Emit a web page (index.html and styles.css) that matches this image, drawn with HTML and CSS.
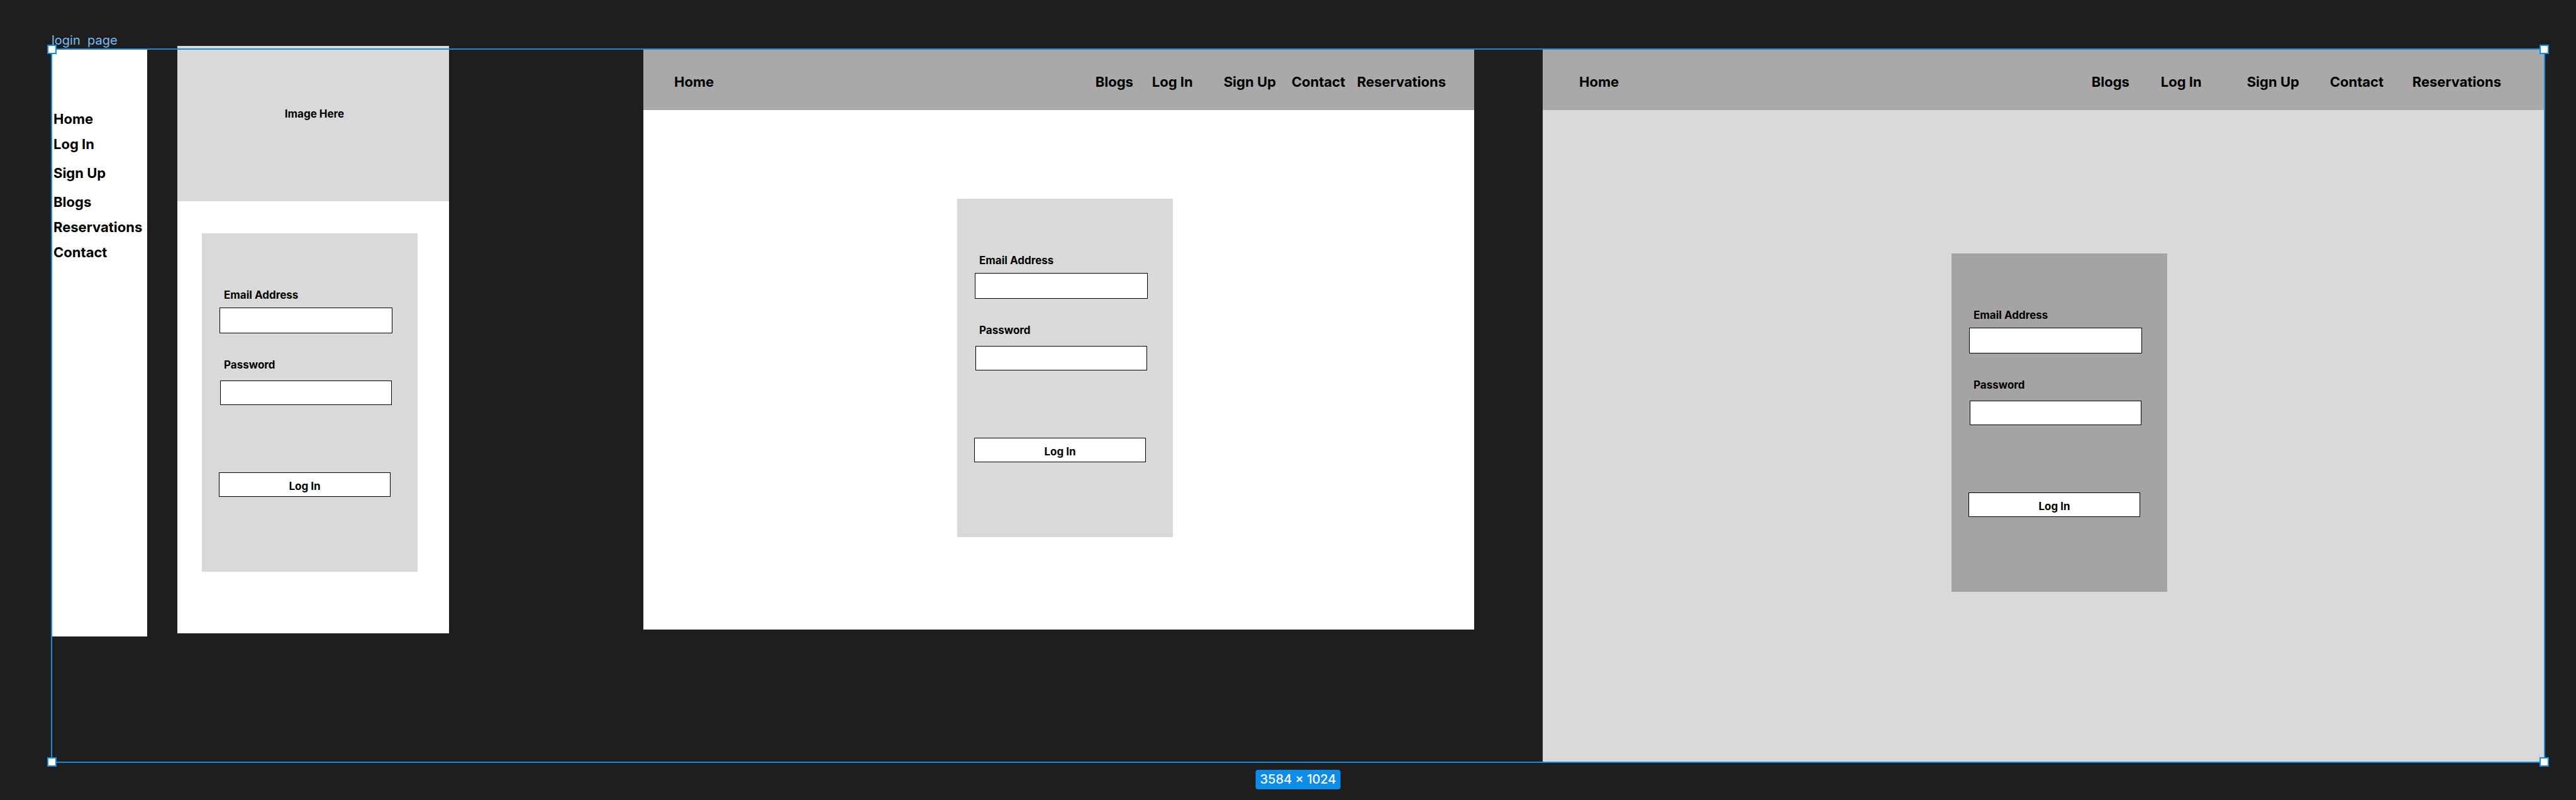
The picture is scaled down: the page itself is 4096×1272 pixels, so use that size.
FILE: index.html
```html
<!DOCTYPE html>
<html lang="en">
<head>
<meta charset="utf-8">
<title>login page</title>
<link rel="stylesheet" href="styles.css">
</head>
<body>
<main class="canvas">
  <section class="group">
    <nav class="artboard drawer">
      <a href="#">Home</a>
      <a href="#">Log In</a>
      <a href="#" class="spaced">Sign Up</a>
      <a href="#" class="spaced">Blogs</a>
      <a href="#">Reservations</a>
      <a href="#">Contact</a>
    </nav>

    <section class="artboard mobile">
      <div class="hero">Image Here</div>
      <div class="stage">
        <form class="card">
          <label for="m-email">Email Address</label>
          <input class="email" id="m-email" type="email">
          <label for="m-password">Password</label>
          <input class="password" id="m-password" type="password">
          <button type="button">Log In</button>
        </form>
      </div>
    </section>

    <section class="artboard tablet">
      <header class="topbar">
        <a href="#">Home</a>
        <nav class="links">
          <a href="#">Blogs</a>
          <a href="#">Log In</a>
          <a href="#">Sign Up</a>
          <a href="#">Contact</a>
          <a href="#">Reservations</a>
        </nav>
      </header>
      <div class="stage">
        <form class="card">
          <label for="t-email">Email Address</label>
          <input class="email" id="t-email" type="email">
          <label for="t-password">Password</label>
          <input class="password" id="t-password" type="password">
          <button type="button">Log In</button>
        </form>
      </div>
    </section>

    <section class="artboard desktop">
      <header class="topbar">
        <a href="#">Home</a>
        <nav class="links">
          <a href="#">Blogs</a>
          <a href="#">Log In</a>
          <a href="#">Sign Up</a>
          <a href="#">Contact</a>
          <a href="#">Reservations</a>
        </nav>
      </header>
      <div class="stage">
        <form class="card">
          <label for="d-email">Email Address</label>
          <input class="email" id="d-email" type="email">
          <label for="d-password">Password</label>
          <input class="password" id="d-password" type="password">
          <button type="button">Log In</button>
        </form>
      </div>
    </section>

    <div class="group-name">login  page</div>
    <div class="selection"></div>
    <span class="handle top left"></span>
    <span class="handle top right"></span>
    <span class="handle bottom left"></span>
    <span class="handle bottom right"></span>
    <div class="size-badge">3584 × 1024</div>
  </section>
</main>
</body>
</html>
```

FILE: styles.css
```css
* {
  box-sizing: border-box;
}

body {
  margin: 0;
  background: #1e1e1e;
  color: #000;
  font-family: Inter, "Liberation Sans", sans-serif;
}

a {
  color: inherit;
  text-decoration: none;
}

.canvas {
  display: flex;
  min-height: 100vh;
  padding: 78px 50px 60px 82px;
}

/* Group of artboards: drawer, mobile, tablet, desktop, with fixed gutters */
.group {
  position: relative;
  flex: 1;
  display: grid;
  grid-template-columns: 152fr 48px 432fr 309px 1321fr 109px 1593fr;
  align-items: start;
}

.artboard {
  background: #fff;
}

.drawer {
  grid-column: 1;
  display: flex;
  flex-direction: column;
  min-height: 934px;
  padding: 91px 0 0 3px;
  font-size: 22px;
  font-weight: 700;
  line-height: 40px;
}

.spaced {
  margin-top: 6px;
}

.mobile {
  grid-column: 3;
  margin-top: -5px;
  padding-bottom: 98px;
}

.tablet {
  grid-column: 5;
  padding-bottom: 147px;
}

.desktop {
  grid-column: 7;
  align-self: stretch;
  background: #d9d9d9;
}

.hero {
  display: flex;
  align-items: center;
  justify-content: center;
  height: 247px;
  padding: 0 0 32px 4px;
  background: #d9d9d9;
  font-size: 17px;
  font-weight: 700;
  line-height: 20px;
}

.topbar {
  display: flex;
  justify-content: space-between;
  height: 97px;
  padding: 39px 45px 0 49px;
  background: #a9a9a9;
  font-size: 22px;
  font-weight: 700;
  line-height: 27px;
}

.links {
  display: grid;
  grid-template-columns: 90px 114px 108px 104px auto;
}

.desktop .topbar {
  padding: 39px 69px 0 58px;
}

.desktop .links {
  grid-template-columns: 110px 137px 132px 131px auto;
}

/* The card sits slightly off centre, so the side tracks differ */
.stage {
  display: grid;
}

.mobile .stage {
  grid-template-columns: 39fr 343px 50fr;
  padding-top: 51px;
}

.tablet .stage {
  grid-template-columns: 499fr 343px 479fr;
  padding-top: 141px;
}

.desktop .stage {
  grid-template-columns: 650fr 343px 600fr;
  padding-top: 228px;
}

.card {
  grid-column: 2;
  display: flex;
  flex-direction: column;
  align-items: flex-start;
  padding: 88px 0 119px 27px;
  background: #d9d9d9;
  font-size: 17px;
  font-weight: 700;
  line-height: 20px;
}

.desktop .card {
  background: #a5a3a4;
}

.card label {
  margin-left: 8px;
}

.card input,
.card button {
  border: 1px solid #000;
  border-radius: 0;
  background: #fff;
  color: #000;
  font: inherit;
}

.card .email {
  width: 275px;
  height: 41px;
  margin: 10px 0 40px 1px;
  padding: 0 8px;
}

.card .password {
  width: 273px;
  height: 39px;
  margin: 15px 0 107px 2px;
  padding: 0 8px;
}

.card button {
  width: 273px;
  height: 39px;
  padding: 4px 0 0;
}

/* Selection chrome drawn over the group */
.group-name {
  position: absolute;
  left: 0;
  bottom: 100%;
  margin-bottom: 1px;
  color: #78bdf4;
  font-size: 20px;
  line-height: 26px;
  white-space: pre;
}

.selection {
  position: absolute;
  inset: -1px;
  border: 2px solid #0d8ce9;
  pointer-events: none;
}

.handle {
  position: absolute;
  width: 15px;
  height: 15px;
  border: 2px solid #0d8ce9;
  background: #fff;
}

.handle.top {
  top: -7px;
}

.handle.bottom {
  bottom: -7px;
}

.handle.left {
  left: -7px;
}

.handle.right {
  right: -7px;
}

.size-badge {
  position: absolute;
  top: calc(100% + 12px);
  left: 50%;
  transform: translateX(-50%);
  padding: 3px 7px 4px;
  border-radius: 4px;
  background: #0d8ce9;
  color: #fff;
  font-size: 20px;
  font-weight: 500;
  line-height: 24px;
  white-space: nowrap;
}
```
